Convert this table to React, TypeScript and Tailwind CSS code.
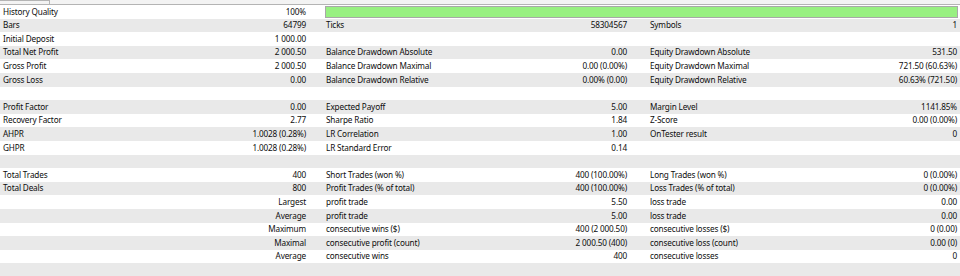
type Row = [string, string, string?, string?, string?, string?];

const ROWS: (Row | null)[] = [
  null, // history quality handled separately
  ["Bars", "64799", "Ticks", "58304567", "Symbols", "1"],
  ["Initial Deposit", "1 000.00"],
  ["Total Net Profit", "2 000.50", "Balance Drawdown Absolute", "0.00", "Equity Drawdown Absolute", "531.50"],
  ["Gross Profit", "2 000.50", "Balance Drawdown Maximal", "0.00 (0.00%)", "Equity Drawdown Maximal", "721.50 (60.63%)"],
  ["Gross Loss", "0.00", "Balance Drawdown Relative", "0.00% (0.00)", "Equity Drawdown Relative", "60.63% (721.50)"],
  ["", ""],
  ["Profit Factor", "0.00", "Expected Payoff", "5.00", "Margin Level", "1141.85%"],
  ["Recovery Factor", "2.77", "Sharpe Ratio", "1.84", "Z-Score", "0.00 (0.00%)"],
  ["AHPR", "1.0028 (0.28%)", "LR Correlation", "1.00", "OnTester result", "0"],
  ["GHPR", "1.0028 (0.28%)", "LR Standard Error", "0.14"],
  ["", ""],
  ["Total Trades", "400", "Short Trades (won %)", "400 (100.00%)", "Long Trades (won %)", "0 (0.00%)"],
  ["Total Deals", "800", "Profit Trades (% of total)", "400 (100.00%)", "Loss Trades (% of total)", "0 (0.00%)"],
  ["", "Largest", "profit trade", "5.50", "loss trade", "0.00"],
  ["", "Average", "profit trade", "5.00", "loss trade", "0.00"],
  ["", "Maximum", "consecutive wins ($)", "400 (2 000.50)", "consecutive losses ($)", "0 (0.00)"],
  ["", "Maximal", "consecutive profit (count)", "2 000.50 (400)", "consecutive loss (count)", "0.00 (0)"],
  ["", "Average", "consecutive wins", "400", "consecutive losses", "0"],
  ["", ""],
];

function Cells({ row }: { row: Row }) {
  const [l1, v1, l2, v2, l3, v3] = row;
  return (
    <>
      <div className="flex w-[310px] justify-between pl-[3px] pr-[4px]">
        <span>{l1}</span>
        <span>{v1}</span>
      </div>
      <div className="ml-[16px] flex w-[302px] justify-between pr-[1px]">
        <span>{l2}</span>
        <span>{v2}</span>
      </div>
      <div className="ml-[22px] flex flex-1 justify-between pr-[3px]">
        <span>{l3}</span>
        <span>{v3}</span>
      </div>
    </>
  );
}

export default function App() {
  return (
    <div
      className="h-[276px] w-[960px] overflow-hidden bg-white text-[8.2px] tracking-[-0.15px] text-[#0d0d0d]"
      style={{ fontFamily: '"Noto Sans", "Open Sans", sans-serif' }}
    >
      {/* tab strip */}
      <div className="flex h-[5px] border-b border-[#b4b4b4] bg-[#f3f3f3]">
        <div className="w-[50px] border-r border-t border-[#b4b4b4]" />
      </div>

      {ROWS.map((row, i) => (
        <div
          key={i}
          className={`flex h-[13.6px] items-center leading-none ${i % 2 === 1 ? "bg-[#e9e9e9]" : "bg-white"}`}
        >
          {row ? (
            <Cells row={row} />
          ) : (
            <>
              <div className="flex w-[310px] justify-between pl-[3px] pr-[4px]">
                <span>History Quality</span>
                <span>100%</span>
              </div>
              <div className="ml-[15px] mr-[2px] h-[12px] flex-1 border border-[#a8a8a8] bg-[#98f081]" />
            </>
          )}
        </div>
      ))}
    </div>
  );
}
